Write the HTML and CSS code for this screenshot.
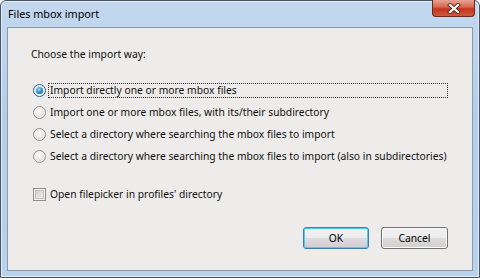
FILE: index.html
```html
<!DOCTYPE html>
<html lang="en">
<head>
    <meta charset="UTF-8">
    <title>Files mbox import</title>
    <link rel="stylesheet" href="styles.css">
</head>
<body>
    <!-- Ventana -->
    <div class="ventana">
        <div class="barra-titulo">
            <span class="titulo">Files mbox import</span>
            <span class="cerrar">
                <svg width="14" height="11" viewBox="0 0 14 11">
                    <path d="M3 2 L11 9 M11 2 L3 9" stroke="#5a2a22" stroke-width="4" stroke-linecap="square"/>
                    <path d="M3 2 L11 9 M11 2 L3 9" stroke="#fff" stroke-width="2.2" stroke-linecap="square"/>
                </svg>
            </span>
        </div>

        <div class="cliente">
            <div class="pregunta">Choose the import way:</div>

            <div class="opciones">
                <div class="opcion">
                    <span class="radio marcado"></span>
                    <span class="etiqueta foco">Import directly one or more mbox files</span>
                </div>
                <div class="opcion">
                    <span class="radio"></span>
                    <span class="etiqueta">Import one or more mbox files, with its/their subdirectory</span>
                </div>
                <div class="opcion">
                    <span class="radio"></span>
                    <span class="etiqueta">Select a directory where searching the mbox files to import</span>
                </div>
                <div class="opcion">
                    <span class="radio"></span>
                    <span class="etiqueta">Select a directory where searching the mbox files to import (also in subdirectories)</span>
                </div>
            </div>

            <div class="opcion casilla-fila">
                <span class="casilla"></span>
                <span class="etiqueta">Open filepicker in profiles' directory</span>
            </div>

            <div class="botones">
                <button class="boton defecto">OK</button>
                <button class="boton">Cancel</button>
            </div>
        </div>
    </div>
</body>
</html>
```

FILE: styles.css
```css
body {
    margin: 0;
    padding: 0;
    font-family: 'Noto Sans', 'Open Sans', sans-serif;
    font-size: 10.3px;
    color: #111;
}

/* Marco de la ventana */
.ventana {
    width: 480px;
    height: 278px;
    box-sizing: border-box;
    border: 1px solid #4a5563;
    border-radius: 6px 6px 0 0;
    background: linear-gradient(180deg, #c3d8ee 0%, #b4cfea 40%, #b9d3ee 100%);
    box-shadow: inset 0 0 0 1px rgba(255,255,255,0.55);
}

.barra-titulo {
    display: flex;
    align-items: flex-start;
    justify-content: space-between;
    height: 26px;
}
.titulo {
    padding: 5px 0 0 7px;
    line-height: 16px;
    font-size: 10.8px;
    color: #000;
}
.cerrar {
    width: 43px;
    height: 17px;
    margin: -1px 4px 0 0;
    box-sizing: border-box;
    border: 1px solid #6b2a20;
    border-top: none;
    border-radius: 0 0 4px 4px;
    background: linear-gradient(180deg, #e8a493 0%, #d4654c 45%, #c2351c 55%, #d0583c 100%);
    display: flex;
    align-items: center;
    justify-content: center;
}

/* Area cliente */
.cliente {
    width: 466px;
    height: 244px;
    margin-left: 6px;
    box-sizing: border-box;
    border: 1px solid #8b99a8;
    background: #edecea;
    padding: 18px 24px 0 0;
    display: flex;
    flex-direction: column;
}

.pregunta {
    line-height: 16px;
    padding-left: 23px;
}

.opciones {
    margin-top: 17px;
    display: flex;
    flex-direction: column;
}

.opcion {
    display: flex;
    align-items: center;
    height: 22px;
    padding-left: 25px;
}

.etiqueta {
    margin-left: 2px;
    padding: 0 1px;
    line-height: 13px;
    border: 1px solid transparent;
    white-space: nowrap;
}
.etiqueta.foco {
    flex: 1;
    border: 1px dotted #333;
}

/* Botones de radio */
.radio {
    width: 11px;
    height: 11px;
    border-radius: 50%;
    border: 1px solid #8e8f8f;
    background: radial-gradient(circle at 45% 40%, #fdfdfd 0%, #e4e4e4 55%, #cfcfcf 100%);
    box-shadow: inset 0 0 0 1px #f6f6f6;
    position: relative;
    flex: none;
}
.radio.marcado {
    border-color: #2c628b;
}
.radio.marcado:after {
    content: "";
    position: absolute;
    left: 2px;
    top: 2px;
    width: 7px;
    height: 7px;
    border-radius: 50%;
    background: radial-gradient(circle at 40% 35%, #8fe0ff 0%, #2a86c4 55%, #0e4e80 100%);
}

/* Casilla */
.casilla-fila {
    margin-top: 16px;
}
.casilla {
    width: 11px;
    height: 11px;
    border: 1px solid #8e8f8f;
    background: linear-gradient(135deg, #cbcbcb 0%, #f4f4f4 100%);
    box-shadow: inset 0 0 0 1px #f4f4f4, inset 0 0 0 2px #c2c2c2;
    flex: none;
}

/* Botones */
.botones {
    display: flex;
    justify-content: flex-end;
    gap: 12px;
    margin-top: 22px;
}
.boton {
    width: 67px;
    height: 22px;
    font-family: inherit;
    font-size: 10.3px;
    color: #000;
    border: 1px solid #707070;
    border-radius: 3px;
    background: linear-gradient(180deg, #f2f2f2 0%, #ebebeb 50%, #dddddd 51%, #cfcfcf 100%);
    box-shadow: inset 0 0 0 1px #fcfcfc;
    padding: 0;
}
.boton.defecto {
    width: 66px;
    border-color: #3c7fb1;
    box-shadow: inset 0 0 0 1px #48d0f4;
}
```
